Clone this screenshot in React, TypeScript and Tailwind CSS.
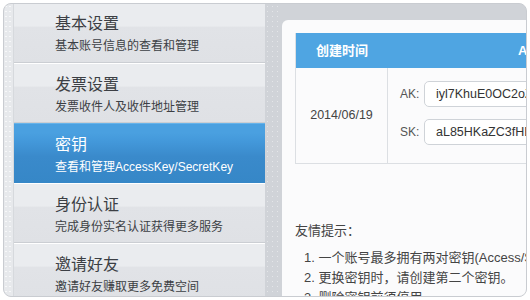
import React from "react";

const items = [
  { t: "基本设置", s: "基本账号信息的查看和管理" },
  { t: "发票设置", s: "发票收件人及收件地址管理" },
  { t: "密钥", s: "查看和管理AccessKey/SecretKey", active: true },
  { t: "身份认证", s: "完成身份实名认证获得更多服务" },
  { t: "邀请好友", s: "邀请好友赚取更多免费空间" },
];

export default function App() {
  return (
    <div
      className="w-[530px] h-[300px] bg-white p-[3px]"
      style={{ fontFamily: '"Liberation Sans", "Noto Sans CJK SC", sans-serif' }}
    >
      <div className="flex h-full rounded-[8px] border border-[#c9ccd1] overflow-hidden bg-[#d0d3d8]">
        <div className="w-[10px] shrink-0 bg-[#e7e9ec] bg-[radial-gradient(circle,#f7f8f9_0.7px,transparent_0.9px)] bg-[length:4px_5px] border-r border-[#d6d9dd]" />
        <div className="w-[251px] shrink-0 flex flex-col">
          {items.map((it, i) =>
            it.active ? (
              <div
                key={i}
                className="h-[60px] shrink-0 border-t border-[#66b3ea] bg-[linear-gradient(#4aa0e0_0,#4aa0e0_15%,#4398da_30%,#3a8acb_55%,#3687c7_100%)] pl-[41px] pt-[9px] text-white"
              >
                <div className="text-[16px] leading-[24px]">{it.t}</div>
                <div className="text-[12px] leading-[18px] mt-[1px]">{it.s}</div>
              </div>
            ) : (
              <div
                key={i}
                className={`${i === 0 ? "h-[59px] pt-[8px]" : "h-[60px] border-t pt-[9px]"} shrink-0 border-white border-b border-b-[#cbced3] bg-[linear-gradient(#eaecef_0,#eaecef_38%,#e1e3e7_40%,#dfe1e5_100%)] pl-[41px] text-[#3c3f44] ${i === 4 ? "grow" : ""}`}
              >
                <div className="text-[16px] leading-[24px]">{it.t}</div>
                <div className="text-[12px] leading-[18px] mt-[1px]">{it.s}</div>
              </div>
            )
          )}
        </div>
        <div className="w-[17px] shrink-0 bg-[#d0d3d8] bg-[radial-gradient(circle,#e4e6e9_0.7px,transparent_0.9px)] bg-[length:5px_5px]" />
        <div className="flex-1 min-w-0 pt-[16px] bg-[#d0d3d8]">
          <div className="h-full rounded-tl-[6px] bg-[#fbfbfc] pl-[13px] pt-[13px] overflow-hidden">
            <div className="w-[300px] border-l border-b border-[#dcdfe3]">
              <div className="flex h-[35px] bg-[#4fa5e2] text-white text-[13px] font-bold items-center">
                <div className="w-[92px] text-center">创建时间</div>
                <div className="pl-[130px]">AccessKey</div>
              </div>
              <div className="flex h-[95px]">
                <div className="w-[92px] shrink-0 border-r border-[#dcdfe3] flex items-center justify-center text-[12.5px] text-[#444]">
                  2014/06/19
                </div>
                <div className="flex-1 pl-[12px] pt-[13px] flex flex-col gap-[12px]">
                  <div className="flex items-center">
                    <span className="w-[24px] text-[12px] text-[#555]">AK:</span>
                    <div className="flex-1 h-[26px] border border-[#cfd3d8] rounded-[5px] bg-white pl-[11px] flex items-center text-[12.5px] text-[#333] whitespace-nowrap overflow-hidden">
                      iyl7KhuE0OC2oZk3nGdE8YqV1sLm
                    </div>
                  </div>
                  <div className="flex items-center">
                    <span className="w-[24px] text-[12px] text-[#555]">SK:</span>
                    <div className="flex-1 h-[26px] border border-[#cfd3d8] rounded-[5px] bg-white pl-[11px] flex items-center text-[12.5px] text-[#333] whitespace-nowrap overflow-hidden">
                      aL85HKaZC3fHEw9pQmR2tXvB7nUj
                    </div>
                  </div>
                </div>
              </div>
            </div>
            <div className="mt-[57px] text-[13px] text-[#444] leading-[20px] whitespace-nowrap">
              <div>友情提示：</div>
              <ol className="mt-[7px] pl-[9px]">
                <li>1. 一个账号最多拥有两对密钥(Access/SecretKey)</li>
                <li>2. 更换密钥时，请创建第二个密钥。</li>
                <li>3. 删除密钥前须停用</li>
              </ol>
            </div>
          </div>
        </div>
      </div>
    </div>
  );
}
